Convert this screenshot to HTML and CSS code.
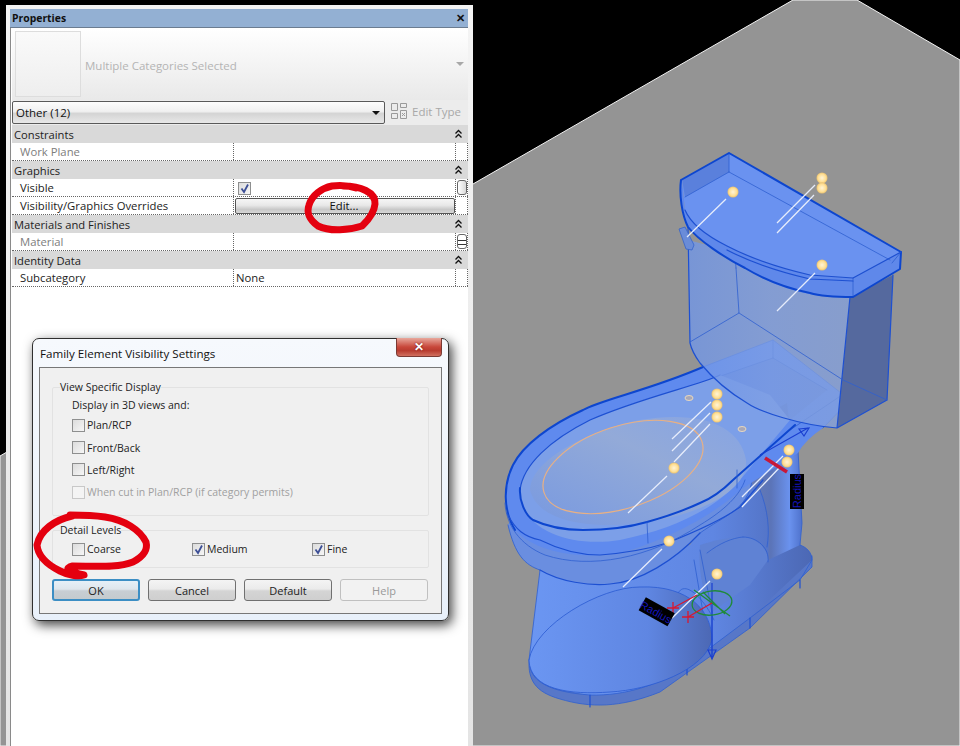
FILE: index.html
```html
<!DOCTYPE html>
<html lang="en">
<head>
<meta charset="utf-8">
<title>Family Element Visibility Settings</title>
<link rel="stylesheet" href="styles.css">
</head>
<body>
<main class="stage">
  <svg class="scene" width="960" height="746" viewBox="0 0 960 746" aria-hidden="true">
    <defs>
      <linearGradient id="footGrad" x1="0" x2="1" y1="0" y2="0"><stop offset="0" stop-color="#6b96f2"/><stop offset=".65" stop-color="#5f86e2"/><stop offset="1" stop-color="#4c68b4"/></linearGradient>
      <linearGradient id="tankGrad" x1="0" x2="1" y1="0" y2="0"><stop offset="0" stop-color="#7096e8"/><stop offset=".5" stop-color="#7f9fe4"/><stop offset="1" stop-color="#84a0dc"/></linearGradient>
      <linearGradient id="seatGrad" x1="0" x2="1" y1="1" y2="0"><stop offset="0" stop-color="#7899e0"/><stop offset=".6" stop-color="#93aad8"/><stop offset="1" stop-color="#86a4e4"/></linearGradient>
      <linearGradient id="colGrad" x1="0" x2="1" y1="0" y2="0"><stop offset="0" stop-color="#6c7fb4"/><stop offset=".5" stop-color="#5b74b8"/><stop offset=".8" stop-color="#6a92ee"/><stop offset="1" stop-color="#4f72cc"/></linearGradient>
      <radialGradient id="grip"><stop offset="0" stop-color="#fff4d8"/><stop offset=".7" stop-color="#ffdf94"/><stop offset="1" stop-color="#e8c070"/></radialGradient>
    </defs>
    <polygon class="ground" points="0,456 793,0 857,0 960,60 960,746 0,746"/>

    <!-- foot and pedestal -->
    <path class="f-foot-side" d="M529,660 C528,680 535,692 560,699 C590,708 620,708 660,692 L750,628 L812,567 L812,556 L800,545 L700,600 Z"/>
    <path class="f-ped" d="M540,570 L529,660 C530,677 545,688 590,695 C625,696 660,685 687,665 L750,618 L812,560 C812,552 806,547 800,545 L798,450 L740,470 L690,545 Z"/>
    <path class="l-thin" d="M530,667 C533,682 550,692 590,695 C625,696 660,685 687,665 L750,618 L800,580 L812,560 C812,552 806,547 800,545"/>
    <path class="l-thin" d="M529,660 C528,680 535,692 560,699 C590,708 620,708 660,692 L750,628 L812,567 L812,556"/>
    <path class="l-mid" d="M687,665 L687,675 M750,618 L750,628 M800,580 L800,588 M590,695 L590,707"/>
    <path class="f-col" d="M740,470 L798,450 L802,523 L800,545 L768,560 C770,535 768,515 762,495 Z"/>
    <path class="f-duct" d="M700,545 C715,540 730,537 743,537 C755,537 768,548 768,560 L750,585 L712,612 C702,590 698,570 700,545 Z"/>
    <path class="l-thin" d="M743,537 C757,537 770,548 768,562 M707,553 C720,543 732,538 743,537 M700,550 L712,612 M694,560 L706,630 M676,600 C680,575 702,595 714,620 M760,490 C768,510 770,530 767,547"/>
    <path class="f-footTop" d="M529,660 C535,625 600,587 640,587 C690,585 712,612 712,640 C705,670 650,690 610,692 C570,695 530,690 529,660 Z"/>
    <path class="l-thin" d="M540,570 L529,660 M798,450 L802,523 L800,545 M712,612 L712,657"/>

    <!-- bowl -->
    <path class="f-bowl" d="M508,525 C515,555 525,565 540,570 C560,582 590,586 610,584 C640,582 675,560 700,533 C725,515 748,510 752,480 L740,440 L520,500 Z"/>
    <path class="l-mid" d="M540,570 C560,582 590,586 610,584 C640,582 675,560 700,533"/>
    <path class="l-thin" d="M508,525 C515,555 525,565 540,570 M700,533 C725,515 748,510 752,480"/>

    <!-- deck and seat -->
    <path class="f-seat" d="M703,367 C650,390 600,400 583,410 C550,425 523,445 513,465 C503,485 503,510 515,530 C535,552 580,560 620,553 C670,540 720,510 740,490 L798,453 Q805,440 823,428 L850,400 L773,340 Z"/>
    <path class="f-tray" d="M773,358 L827,390 L790,420 L730,395 L715,378 Z"/>
    <path class="f-shade" d="M787,403 L789,420 L745,465 L730,433 Z"/>
    <path class="l-thin" d="M703,367 L773,340 L850,400 L823,428 M773,358 L827,390 M773,358 L715,378 M773,340 L773,358 M842,395 L790,430"/>
    <path class="f-rim" d="M520,490 C523,465 550,440 590,420 C640,398 700,385 720,375 L770,395 L790,420 L740,480 C715,510 670,530 620,540 C570,548 520,530 520,490 Z"/>
    <path class="f-innerBowl" d="M530,490 C530,460 590,430 640,420 C700,410 740,425 746,460 C748,485 715,505 680,515 C620,532 540,530 530,490 Z"/>
    <path class="l-strong" d="M703,367 C650,390 600,400 583,410 C550,425 523,445 513,465 C503,485 503,510 515,530"/>
    <path class="l-mid" d="M507,513 C515,530 525,537 540,540 C560,550 580,555 600,555 C625,553 645,550 667,543 C700,530 725,518 740,507 L763,480"/>
    <path class="l-mid" d="M520,490 C523,465 550,440 590,420 C640,398 700,385 720,375"/>
    <path class="l-strong" d="M520,488 C519,500 525,515 533,520 C550,528 565,530 583,530 C610,530 630,527 647,522 C665,517 685,510 700,503 C715,497 725,488 733,480 L795,425"/>
    <path class="l-thin" d="M505,503 C506,525 520,545 545,555 C590,570 650,558 700,525 C725,510 740,495 745,480"/>
    <ellipse class="orange" cx="623" cy="467" rx="83" ry="41" transform="rotate(-18 623 467)"/>
    <path class="l-thin" d="M737,470 L737,488 M647,522 L648,543"/>
    <ellipse class="hole" cx="689" cy="398" rx="4" ry="2.500"/>
    <ellipse class="hole" cx="742" cy="429" rx="4" ry="2.500"/>

    <!-- tank -->
    <path class="f-tankR" d="M850,297 L893,275 L887,400 L837,428 Z"/>
    <path class="f-tank" d="M688,240 L726,250 L810,293 L850,297 L837,428 C800,425 760,412 745,402 C725,390 710,375 700,363 Q692,352 690,343 Z"/>
    <path class="l-mid" d="M688,227 L690,343 Q692,352 700,363 C710,375 725,390 747,403 C760,412 800,425 837,428 L887,400 M850,297 L837,428 M893,275 L887,400"/>
    <path class="l-thin" d="M736,268 L739,313 L690,342 M739,313 L843,380 L887,400 M729,173 L736,268"/>
    <path class="f-lidFront" d="M681,180 C679,195 682,215 688,227 C698,240 725,258 760,277 C780,287 800,293 820,296 L853,297 L900,269 L901,252 L853,278 L810,275 C780,268 750,258 727,246 C705,235 690,222 685,210 L682,180 Z"/>
    <path class="f-lidTop" d="M729,153 L901,252 L853,278 L810,275 C780,268 750,258 727,246 C705,235 690,222 685,210 L682,180 Z"/>
    <path class="f-tray" d="M729,153 L682,179 L685,197 L729,172 Z"/>
    <path class="l-thin" d="M729,172 L685,197 M729,172 L890,260 M729,153 L729,172 M853,278 L853,297 M901,252 L892,263"/>
    <path class="l-strong" d="M681,180 L729,153 L901,252 M853,297 C835,297 820,296 810,293 C780,287 760,277 745,268 C725,258 698,240 688,227 C682,215 679,195 681,180 M853,297 L900,269 L901,252"/>
    <path class="l-mid" d="M853,278 L901,252 M853,278 L810,275 C780,268 750,258 727,246 C705,235 690,222 685,210 M853,281 L810,279 C780,272 750,262 727,250"/>
    <path class="f-tab" d="M679,229 L685,227 L694,245 L692,250 L686,249 Z"/>

    <!-- grip stems -->
    <path class="stem" d="M726,199 L687,237 M815,185 L777,223 M814,195 L777,233 M815,273 L777,311 M711,402 L672,439 M710,413 L672,451 M710,424 L674,462 M667,476 L628,513 M783,456 L742,497 M780,467 L742,507 M662,549 L623,587 M710,581 L672,618"/>
    <circle class="dot" cx="733" cy="192" r="5.500"/>
    <circle class="dot" cx="822" cy="178" r="5.500"/>
    <circle class="dot" cx="822" cy="188" r="5.500"/>
    <circle class="dot" cx="822" cy="265" r="5.500"/>
    <circle class="dot" cx="717" cy="394" r="5.500"/>
    <circle class="dot" cx="717" cy="405" r="5.500"/>
    <circle class="dot" cx="717" cy="417" r="5.500"/>
    <circle class="dot" cx="674" cy="468" r="5.500"/>
    <circle class="dot" cx="789" cy="450" r="5.500"/>
    <circle class="dot" cx="787" cy="462" r="5.500"/>
    <circle class="dot" cx="669" cy="541" r="5.500"/>
    <circle class="dot" cx="717" cy="574" r="5.500"/>

    <!-- controls -->
    <path class="arrow" d="M712,583 L712,657 M708,650 L712,659 L716,650 Z M760,455 L808,428 M799,429 L809,428 L804,436 Z"/>
    <ellipse class="green" cx="712" cy="603" rx="20" ry="12" transform="rotate(-8 712 603)"/>
    <path class="green" d="M694,590 L730,616 M703,592 L725,614"/>
    <path class="red" d="M673,608 L697,595 M688,617 L712,603 M673,602 L673,614 M667,608 L679,608 M688,611 L688,623 M682,617 L694,617"/>
    <path class="redThick" d="M765,458 L787,472"/>
    <g class="tag" transform="translate(656 612) rotate(29)">
      <rect x="-16" y="-8" width="33" height="15"/>
      <text x="0" y="4" text-anchor="middle">Radius</text>
    </g>
    <g class="tag" transform="translate(797 491) rotate(-90)">
      <rect x="-18" y="-7" width="35" height="14"/>
      <text x="0" y="4" text-anchor="middle">Radius</text>
    </g>
  </svg>

  <section class="panel">
    <header class="panel-title"><span>Properties</span><b class="panel-close">✕</b></header>
    <div class="panel-body">
      <div class="type-row">
        <div class="thumb"></div>
        <span class="type-name">Multiple Categories Selected</span>
        <span class="type-arrow"></span>
      </div>
      <div class="filter-row">
        <div class="combo"><span>Other (12)</span><i class="combo-arrow"></i></div>
        <div class="edit-type">
          <svg width="16" height="16" viewBox="0 0 16 16" aria-hidden="true"><path class="ico" d="M.5.5h6v7h-6zM9.500.5h6v4h-6zM.5 10.500h6v5h-6zM9.500 7.500h6v8h-6z"/><path class="ico" d="M11 10l3 3M14 10l-3 3"/></svg>
          <span>Edit Type</span>
        </div>
      </div>

      <div class="sect"><span>Constraints</span><svg class="chev" width="9" height="10" viewBox="0 0 9 10" aria-hidden="true"><path d="M1.500 4.500L4.500 1.500L7.500 4.500M1.500 8.500L4.500 5.500L7.500 8.500"/></svg></div>
      <div class="prop muted"><span class="pn">Work Plane</span><span class="pv"></span><span class="ps"></span></div>

      <div class="sect"><span>Graphics</span><svg class="chev" width="9" height="10" viewBox="0 0 9 10" aria-hidden="true"><path d="M1.500 4.500L4.500 1.500L7.500 4.500M1.500 8.500L4.500 5.500L7.500 8.500"/></svg></div>
      <div class="prop"><span class="pn">Visible</span><span class="pv"><span class="cb on"><svg width="11" height="11" viewBox="0 0 11 11" aria-hidden="true"><path d="M2.500 5.500L5 9L9 1.500"/></svg></span></span><span class="ps"><i class="thumb-bar"></i></span></div>
      <div class="prop"><span class="pn">Visibility/Graphics Overrides</span><span class="pv"><button class="edit-btn" type="button">Edit...</button></span><span class="ps"></span></div>

      <div class="sect"><span>Materials and Finishes</span><svg class="chev" width="9" height="10" viewBox="0 0 9 10" aria-hidden="true"><path d="M1.500 4.500L4.500 1.500L7.500 4.500M1.500 8.500L4.500 5.500L7.500 8.500"/></svg></div>
      <div class="prop muted"><span class="pn">Material</span><span class="pv"></span><span class="ps"><i class="thumb-bar lined"></i></span></div>

      <div class="sect"><span>Identity Data</span><svg class="chev" width="9" height="10" viewBox="0 0 9 10" aria-hidden="true"><path d="M1.500 4.500L4.500 1.500L7.500 4.500M1.500 8.500L4.500 5.500L7.500 8.500"/></svg></div>
      <div class="prop"><span class="pn">Subcategory</span><span class="pv">None</span><span class="ps"></span></div>
    </div>
  </section>

  <section class="dialog">
    <header class="dialog-title">
      <span>Family Element Visibility Settings</span>
      <span class="dialog-close">✕</span>
    </header>
    <div class="dialog-body">
      <fieldset class="group view">
        <legend>View Specific Display</legend>
        <p class="hint">Display in 3D views and:</p>
        <label class="opt"><span class="cb"></span>Plan/RCP</label>
        <label class="opt"><span class="cb"></span>Front/Back</label>
        <label class="opt"><span class="cb"></span>Left/Right</label>
        <label class="opt off"><span class="cb"></span>When cut in Plan/RCP (if category permits)</label>
      </fieldset>
      <fieldset class="group detail">
        <legend>Detail Levels</legend>
        <div class="levels">
          <label class="opt"><span class="cb"></span>Coarse</label>
          <label class="opt"><span class="cb on"><svg width="11" height="11" viewBox="0 0 11 11" aria-hidden="true"><path d="M2.500 5.500L5 9L9 1.500"/></svg></span>Medium</label>
          <label class="opt"><span class="cb on"><svg width="11" height="11" viewBox="0 0 11 11" aria-hidden="true"><path d="M2.500 5.500L5 9L9 1.500"/></svg></span>Fine</label>
        </div>
      </fieldset>
      <div class="actions">
        <button class="btn primary" type="button">OK</button>
        <button class="btn" type="button">Cancel</button>
        <button class="btn" type="button">Default</button>
        <button class="btn dim" type="button">Help</button>
      </div>
    </div>
  </section>

  <svg class="marks" width="960" height="746" viewBox="0 0 960 746" aria-hidden="true">
    <path d="M343,186 C360,186 376,192 375,204 C374,215 366,222 362,226 C350,230 330,232 318,226 C310,220 306,214 309,205 C312,195 322,188 332,186 C340,185 350,186 356,188"/>
    <path d="M72,516 C55,520 40,530 37,545 C38,558 50,566 60,571 C68,575 78,577 84,575 C72,572 62,569 72,566 C95,566 118,568 133,562 C144,556 148,550 146,542 C140,530 125,520 105,517 C92,515 80,515 70,515"/>
  </svg>
</main>
</body>
</html>
```
FILE: styles.css
```css
* { box-sizing: border-box; }
html, body { margin: 0; padding: 0; }
body { font-family: "Open Sans", "Noto Sans", sans-serif; font-size: 11.500px; color: #222; }
.stage { position: relative; width: 960px; height: 746px; overflow: hidden; background: #000; }
.scene, .marks { position: absolute; left: 0; top: 0; display: block; }
.marks { pointer-events: none; }
.marks path { fill: none; stroke: #e4000f; stroke-width: 7; stroke-linecap: round; stroke-linejoin: round; }

/* scene */
.ground { fill: #949494; stroke: #f4f4f4; stroke-width: 1; }
.f-foot-side { fill: #5777c8; }
.f-ped { fill: url(#footGrad); }
.f-col { fill: url(#colGrad); }
.f-duct { fill: #5f82d4; }
.f-footTop { fill: url(#footGrad); stroke: #2a5ad2; stroke-width: .8; }
.f-bowl { fill: #6a8ee0; }
.f-seat { fill: #5f8aee; }
.f-rim { fill: #7c9fe8; }
.f-innerBowl { fill: url(#seatGrad); }
.f-shade { fill: #5272c4; }
.f-tank { fill: url(#tankGrad); fill-opacity: .78; }
.f-tankR { fill: #55699e; }
.f-lidFront { fill: #5f88ea; }
.f-lidTop { fill: #6a92f0; }
.f-tray { fill: #5a80dc; }
.f-tab { fill: #6a8cd8; stroke: #3563cc; stroke-width: .8; }
.l-thin, .l-mid, .l-strong { fill: none; stroke-linecap: round; stroke-linejoin: round; }
.l-thin { stroke: #2f5fd0; stroke-width: .8; }
.l-mid { stroke: #1d50d2; stroke-width: 1.200; }
.l-strong { stroke: #0d46cf; stroke-width: 2; }
.orange { fill: none; stroke: #e8b084; stroke-width: 1.200; }
.hole { fill: #a8a8b8; stroke: #e8d8c0; stroke-width: 1; }
.stem { fill: none; stroke: #e6ecfb; stroke-width: 1.300; }
.dot { fill: url(#grip); }
.arrow { fill: none; stroke: #1a3fd0; stroke-width: 1.200; }
.green { fill: none; stroke: #1f8a3a; stroke-width: 1.300; }
.red { fill: none; stroke: #d81830; stroke-width: 1.300; }
.redThick { fill: none; stroke: #c81838; stroke-width: 3.500; }
.tag rect { fill: #000; }
.tag text { fill: #1414b8; font-family: "Liberation Sans", sans-serif; font-size: 11px; }

/* properties panel */
.panel { position: absolute; left: 6px; top: 5px; width: 467px; height: 741px; padding: 4px 5px 0 4px; background: linear-gradient(#f4f4f4, #e4e4e4); display: flex; flex-direction: column; }
.panel-title { height: 19px; flex: none; display: flex; align-items: center; justify-content: space-between; padding: 0 3px 1px 2px; background: #93b0d3; border-bottom: 1px solid #6b7c90; font-weight: 700; font-size: 10.400px; color: #111; }
.panel-close { font-size: 11px; line-height: 1; }
.panel-body { flex: 1; background: #fff; border-left: 1px solid #8a8a8a; padding-left: 1px; display: flex; flex-direction: column; }
.type-row { height: 72px; flex: none; display: flex; align-items: center; padding: 0 3px 0 3px; background: linear-gradient(#fff, #e9e9e9); }
.thumb { width: 66px; height: 66px; flex: none; border: 1px solid #ddd; background: linear-gradient(#fafafa, #eee); }
.type-name { margin: 2px 0 0 4px; flex: 1; color: #b4b4b4; }
.type-arrow { width: 0; height: 0; margin-right: 1px; border: 4px solid transparent; border-top-color: #a8a8a8; border-bottom: 0; }
.filter-row { height: 25px; flex: none; display: flex; align-items: center; background: #ececec; }
.combo { width: 373px; height: 23px; flex: none; display: flex; align-items: center; justify-content: space-between; padding: 0 4px 0 3px; border: 1px solid #5a5a5a; border-radius: 2px; background: linear-gradient(#fdfdfd, #f0f0f0 45%, #d4d4d4 55%, #e8e8e8); color: #111; font-size: 11.500px; }
.combo-arrow { width: 0; height: 0; border: 4px solid transparent; border-top-color: #111; border-bottom: 0; }
.edit-type { margin: 0 0 3px 6px; display: flex; align-items: center; gap: 5px; color: #a8a8a8; }
.ico { fill: none; stroke: #9a9a9a; stroke-width: 1; }
.sect { height: 18px; flex: none; display: flex; align-items: center; justify-content: space-between; padding: 0 5px 0 2px; background: #d9d9d9; color: #222; font-size: 11.200px; }
.chev { display: block; }
.chev path { fill: none; stroke: #111; stroke-width: 1.300; }
.prop { height: 18px; flex: none; display: grid; grid-template-columns: 221px 222px 13px; border-bottom: 1px dotted #666; font-size: 11.300px; }
.pn { padding-left: 8px; line-height: 17px; }
.pv { position: relative; border-left: 1px dotted #666; padding-left: 2px; line-height: 17px; }
.ps { position: relative; border-left: 1px dotted #666; border-right: 1px dotted #666; }
.muted .pn { color: #7d7d7d; }
.thumb-bar { position: absolute; left: 1px; top: 1px; width: 10px; height: 15px; border: 1px solid #666; border-radius: 3px; background: linear-gradient(90deg, #fff, #d8d8d8); }
.thumb-bar.lined { background: linear-gradient(#fff 5px, #333 5px, #333 6px, #fff 6px, #fff 9px, #333 9px, #333 10px, #fff 10px); }
.edit-btn { display: block; width: 220px; height: 16px; margin: 1px 0 0 -1px; padding: 0 2px 0 0; border: 1px solid #555; border-radius: 2px; background: linear-gradient(#f6f6f6, #e8e8e8 45%, #c8c8c8 75%, #d8d8d8); font: inherit; color: #111; line-height: 14px; }

/* checkboxes */
.cb { display: block; flex: none; width: 13px; height: 13px; border: 1px solid #8e8f8f; background: linear-gradient(135deg, #dcdcdc, #f6f6f6); }
.cb svg { display: block; }
.cb svg path { fill: none; stroke: #3d4f96; stroke-width: 1.800; }
.pv > .cb { margin: 3px 0 0 2px; }

/* dialog */
.dialog { position: absolute; left: 32px; top: 338px; width: 417px; height: 283px; border: 1px solid #2f2f2f; border-radius: 7px; background: linear-gradient(#f6f9fd, #e8f0fa); box-shadow: 3px 4px 12px rgba(0, 0, 0, .75); padding: 0 6px 6px; display: flex; flex-direction: column; font-size: 10.500px; }
.dialog-title { position: relative; height: 28px; flex: none; display: flex; align-items: center; padding-left: 1px; color: #111; font-size: 11.600px; }
.dialog-close { position: absolute; right: 0; top: -1px; width: 46px; height: 19px; border: 1px solid #7a3a34; border-top: 0; border-radius: 0 0 4px 4px; background: linear-gradient(#e8a89c, #c8473a 50%, #b83c30 70%, #d07060); color: #fff; font-weight: 700; font-size: 12px; line-height: 17px; text-align: center; text-shadow: 0 0 2px #600; }
.dialog-body { flex: 1; border: 1px solid #777; background: #f0f0f0; padding: 12px 12px 0; display: flex; flex-direction: column; }
.group { margin: 0; padding: 0; border: 1px solid #e2e2e2; border-radius: 2px; background: #f0f0f0; min-width: 0; }
.group legend { margin-left: -12px; padding: 0; line-height: 14px; color: #222; }
.view { height: 136px; padding: 3px 0 0 19px; display: flex; flex-direction: column; }
.hint { margin: 0 0 1px; line-height: 16px; }
.opt { display: flex; align-items: center; gap: 2px; height: 22.400px; color: #222; }
.off { color: #a0a0a0; }
.off .cb { background: #f4f4f4; border-color: #c8c8c8; }
.detail { height: 45px; margin-top: 7px; padding: 1px 0 0 19px; }
.levels { display: grid; grid-template-columns: 120px 120px 100px; }
.actions { margin-top: 11px; display: grid; grid-template-columns: repeat(4, 88px); column-gap: 8px; font-size: 11px; }
.btn { height: 22px; padding: 0; border: 1px solid #707070; border-radius: 3px; background: linear-gradient(#f4f4f4, #ebebeb 45%, #d4d4d4 55%, #cfcfcf); font: inherit; color: #222; }
.primary { border: 2px solid #3c8ec4; background: linear-gradient(#e6f0f8, #dfe6ec 45%, #c8ced4 55%, #c4cace); }
.dim { border-color: #c0c0c0; background: #f2f2f2; color: #999; }
```
